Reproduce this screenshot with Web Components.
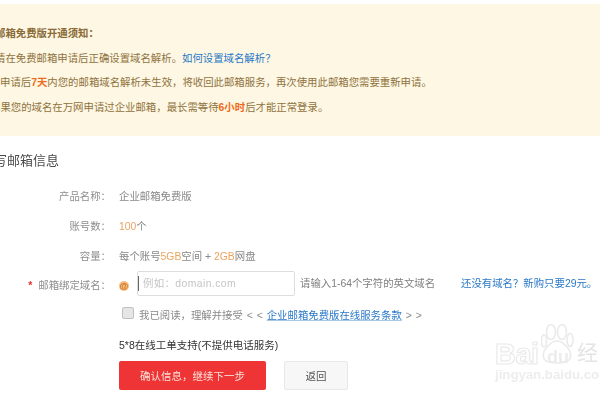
<!DOCTYPE html>
<html lang="zh"><head><meta charset="utf-8"><style>
html,body{margin:0;padding:0;background:#fff;width:600px;height:400px;overflow:hidden;font:10.4px/16px "Liberation Sans","Noto Sans CJK SC",sans-serif}
</style></head><body>
<mail-page>
  <mail-notice>
    <b slot="head">邮箱免费版开通须知：</b>
    <notice-line style="--in:-5px">请在免费邮箱申请后正确设置域名解析。<a>如何设置域名解析？</a></notice-line>
    <notice-line style="--in:0px">申请后<em>7天</em>内您的邮箱域名解析未生效，将收回此邮箱服务，再次使用此邮箱您需要重新申请。</notice-line>
    <notice-line style="--in:-10px">如果您的域名在万网申请过企业邮箱，最长需等待<em>6小时</em>后才能正常登录。</notice-line>
  </mail-notice>
  <mail-form>
    <span slot="title">写邮箱信息</span>
    <form-row label="产品名称"><span class="g">企业邮箱免费版</span></form-row>
    <form-row label="账号数"><span style="color:#e8a468">100</span><span style="color:#888">个</span></form-row>
    <form-row label="容量"><span style="color:#888">每个账号<i style="font-style:normal;color:#eda45c">5GB</i>空间 + <i style="font-style:normal;color:#eda45c">2GB</i>网盘</span></form-row>
    <domain-row></domain-row>
    <agree-row></agree-row>
    <support-line></support-line>
    <action-bar></action-bar>
  </mail-form>
  <baidu-mark></baidu-mark>
</mail-page>
<script>
function def(name, html){
  customElements.define(name, class extends HTMLElement{
    constructor(){super();this.attachShadow({mode:'open'}).innerHTML=typeof html==='function'?html(this):html;}
  });
}
def('mail-page',`<style>
:host{display:block;position:relative;width:600px;height:400px;overflow:hidden;filter:blur(.5px)}
</style><slot></slot>`);
def('mail-notice',`<style>
:host{display:flex;flex-direction:column;margin-top:4px;height:132px;box-sizing:border-box;padding-top:22px;background:#fdf7e3;color:#8f7240;font-size:10.4px;overflow:hidden;white-space:nowrap}
.h{height:16px;margin:0 0 8.5px -5px;color:#8a6a35}
::slotted(b){font-weight:700}
</style><div class="h"><slot name="head"></slot></div><slot></slot>`);
def('notice-line',`<style>
:host{display:block;height:16px;margin-bottom:8.5px;margin-left:var(--in,0);white-space:nowrap;color:#8f7240}
::slotted(a){color:#2a78c8}
::slotted(em){font-style:normal;font-weight:700;color:#f06a20}
</style><slot></slot>`);
def('mail-form',`<style>
:host{display:block;padding-top:15px;color:#888}
.t{margin:0 0 18px -6px;font-size:13px;line-height:20px;color:#4c4c4c;white-space:nowrap}
</style><div class="t"><slot name="title"></slot></div><slot></slot>`);
def('form-row',el=>`<style>
:host{display:flex;height:16px;margin-bottom:14px;white-space:nowrap;font-size:10.4px;color:#888}
.l{width:111px;text-align:right;color:#8e8e8e;flex:none}
.s{width:8px;flex:none}
</style><span class="l">${el.getAttribute('label')}：</span><span class="s"></span><slot></slot>`);
def('domain-row',`<style>
:host{display:flex;align-items:center;height:26px;margin-top:-6px;font-size:10.4px;white-space:nowrap;color:#888}
.l{width:111px;flex:none;text-align:right;color:#8e8e8e}
.l b{color:#e03030;margin-right:6px;font-weight:700}
.atw{width:18px;margin-left:8px;flex:none}
.at{display:block;width:10px;height:10px;line-height:10px;text-align:center;border-radius:50%;background:#f8bd84;color:#c9751f;font-weight:700;font-size:9px}
.i{width:158px;height:25px;box-sizing:border-box;border:1px solid #ddd;border-radius:2px;display:flex;align-items:center;color:#c4c4c4;flex:none;margin:0 5px 5px 0;letter-spacing:.4px;background:#fff}
.c{width:1px;height:15px;background:#666;margin-right:4px}
.tip{width:161px;flex:none;color:#808080;margin-bottom:4px}
a{color:#2a78c8;margin-bottom:4px}
</style><span class="l"><b>*</b>邮箱绑定域名：</span><span class="atw"><span class="at">@</span></span>
<span class="i"><span class="c"></span>例如：domain.com</span>
<span class="tip">请输入1-64个字符的英文域名</span><a>还没有域名？新购只要29元。</a>`);
def('agree-row',`<style>
:host{display:flex;align-items:center;height:18px;margin-top:8px;margin-left:122px;font-size:10.4px;white-space:nowrap;color:#8a8a8a}
.b{width:10px;height:10px;border:1px solid #c0c0c0;border-radius:2px;background:#e6e6e6;margin-right:5px;flex:none;position:relative;top:-3px}
a{color:#2a78c8;text-decoration:underline;text-decoration-thickness:.5px;text-decoration-color:#a8c8ea}
.m{margin:0 1px;word-spacing:1px}
</style><span class="b"></span><span>我已阅读，理解并接受 <span class="m">&lt; &lt;</span> <a>企业邮箱免费版在线服务条款</a> <span class="m">&gt; &gt;</span></span>`);
def('support-line',`<style>
:host{display:block;margin:13px 0 0 119px;font-size:10.5px;line-height:14px;color:#333;white-space:nowrap}
</style>5*8在线工单支持(不提供电话服务)`);
def('action-bar',`<style>
:host{display:flex;gap:18px;margin:9px 0 0 119px}
.p,.s{height:29px;display:flex;align-items:center;justify-content:center;font-size:10.5px;border-radius:2px;box-sizing:border-box}
.p{width:147px;background:#ee3434;color:#f8e0d8}
.s{width:64px;background:#f7f7f7;border:1px solid #e8e8e8;color:#555}
</style><span class="p">确认信息，继续下一步</span><span class="s">返回</span>`);
def('baidu-mark',`<style>
:host{position:absolute;left:495px;top:322px;width:130px;height:64px;color:#fff;white-space:nowrap;--w:#eaeaea}
svg{position:absolute;left:46px;top:0}
.b{position:absolute;top:15px;font-size:29px;line-height:34px;font-weight:700;-webkit-text-stroke:1.2px var(--w);letter-spacing:-.5px}
.d{position:absolute;left:52px;top:25px;font-size:18px;line-height:20px;font-weight:700;color:#ececec}
.k{position:absolute;left:82px;top:19px;font-size:21px;line-height:24px;color:#e4e4e4}
.j{position:absolute;left:0;top:45px;font-size:13.2px;line-height:16px;font-weight:700;color:#ededed}
</style>
<svg width="34" height="44" viewBox="0 0 34 44" fill="#fff" stroke="#eaeaea" stroke-width="1.6"><ellipse cx="10" cy="10" rx="4.5" ry="7.5"/><ellipse cx="21" cy="10" rx="4.5" ry="7.5"/><ellipse cx="3" cy="19" rx="2.5" ry="6"/><ellipse cx="29" cy="18" rx="3" ry="6.5"/><path d="M4 38c-3-3-2-9 2-13 3-3 5-6 10-6s7 3 10 6c4 4 5 10 2 13-3 3-7 3-12 3s-9 0-12-3z"/></svg>
<span class="b">Bai</span><span class="d">du</span><span class="k">经</span><span class="j">jingyan.baidu.com</span>`);
</script>
</body></html>
